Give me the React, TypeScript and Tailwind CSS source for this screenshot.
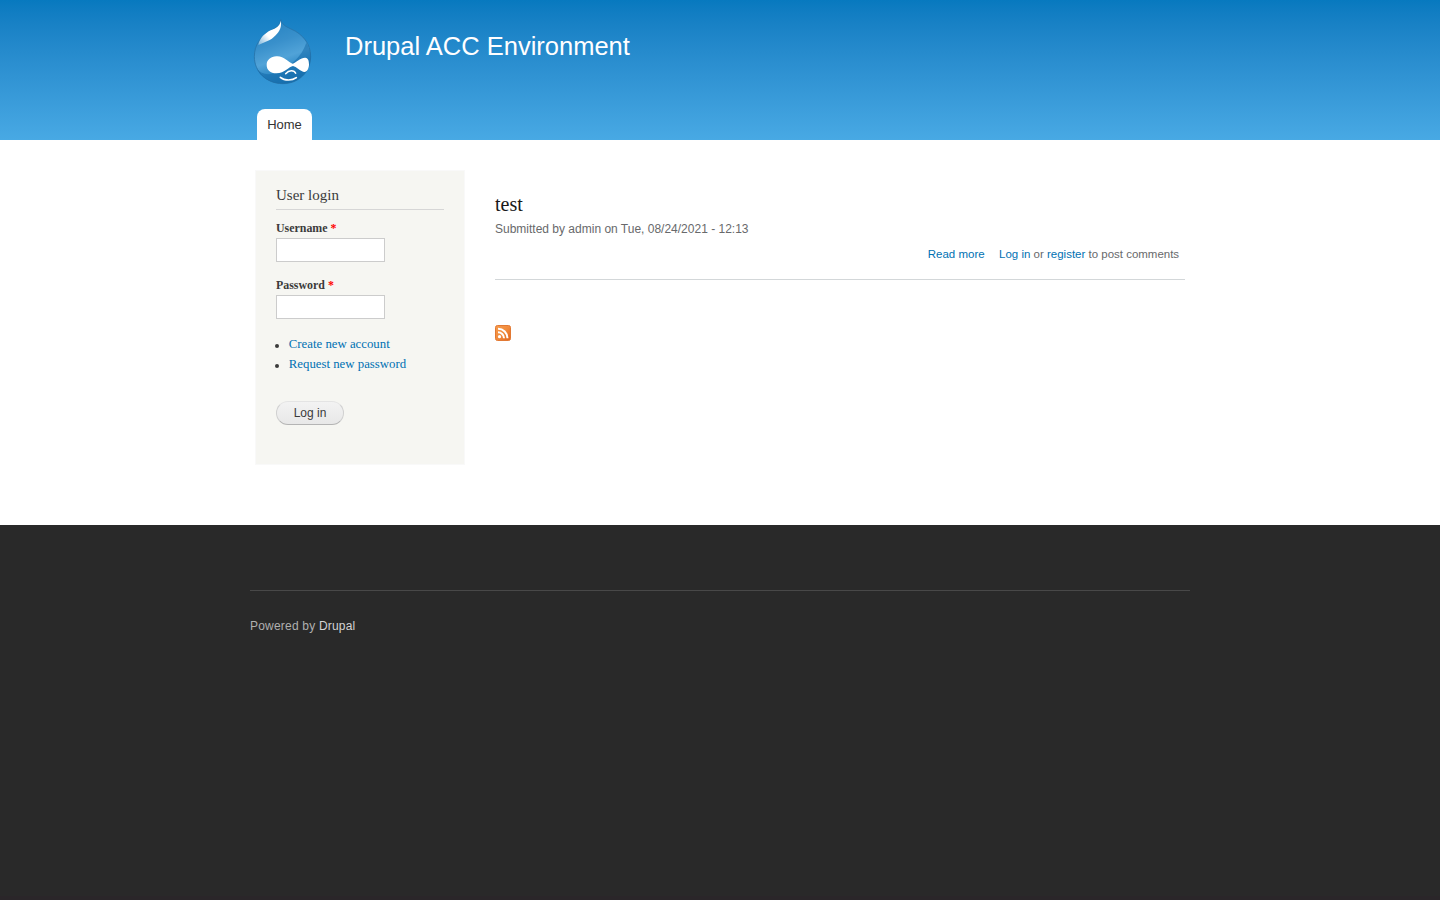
import type { ReactNode } from 'react';

function Logo() {
  return (
    <svg width="64" height="73" viewBox="24 18 192 219" aria-label="Home">
      <defs>
        <linearGradient id="drop" x1="0.3" y1="0" x2="0.6" y2="1">
          <stop offset="0" stopColor="#2583c2" />
          <stop offset="0.35" stopColor="#3990cb" />
          <stop offset="0.6" stopColor="#51a3d8" />
          <stop offset="0.8" stopColor="#2c87c4" />
          <stop offset="1" stopColor="#1c76b4" />
        </linearGradient>
        <linearGradient id="shine" x1="1" y1="0" x2="0" y2="1">
          <stop offset="0.6" stopColor="#fff" />
          <stop offset="1" stopColor="#fff" stopOpacity="0.35" />
        </linearGradient>
      </defs>
      <path d="M107 23C111 37 121 43 138 51C174 66 197 97 197 132C197 181 161 215 113 215C64 215 28 179 28 134C28 100 46 74 73 58C91 48 106 42 107 23Z" fill="url(#drop)" stroke="#2673aa" strokeWidth="2.5" />
      <path d="M184 92C193 106 197 119 197 135C196 179 162 215 113 215C76 215 46 196 35 169C50 190 75 192 101 178C138 160 170 135 184 92Z" fill="#0f66a5" opacity="0.5" />
      <path d="M107 26C111 44 104 57 92 70C78 86 58 91 40 99C44 77 61 63 77 55C94 48 105 42 107 26Z" fill="url(#shine)" />
      <path d="M94 133C116 131 130 151 143 155C154 151 168 136 181 137C190 138 192 148 192 157C192 169 187 181 177 180C166 178 154 164 144 162C132 163 120 184 94 184C76 184 65 174 65 159C65 143 78 134 94 133Z" fill="#fff" />
      <path d="M122 185C127 179 132 176 139 176C146 176 150 179 152 184" fill="none" stroke="#fff" strokeWidth="4.5" strokeLinecap="round" />
      <path d="M106 196C119 207 142 206 154 197" fill="none" stroke="#fff" strokeWidth="5" strokeLinecap="round" />
    </svg>
  );
}

function FeedIcon() {
  return (
    <svg width="16" height="16" viewBox="0 0 16 16" className="mt-[45px] block">
      <defs>
        <linearGradient id="feed" x1="0" y1="0" x2="1" y2="1">
          <stop offset="0" stopColor="#f79c4c" />
          <stop offset="0.5" stopColor="#f18b3d" />
          <stop offset="1" stopColor="#e0641c" />
        </linearGradient>
      </defs>
      <rect x="0.5" y="0.5" width="15" height="15" rx="2" fill="url(#feed)" stroke="#e27933" />
      <circle cx="4.5" cy="11.7" r="1.6" fill="#fff" />
      <path d="M3 7.3A6 6 0 0 1 9 13.2M3 3.7A9.5 9.5 0 0 1 12.5 13.2" fill="none" stroke="#fff" strokeWidth="2" />
    </svg>
  );
}

function Link({ children }: { children: ReactNode }) {
  return <a href="#" className="text-[#0071b3]">{children}</a>;
}

function Field({ label, type }: { label: string; type: string }) {
  return (
    <label className="block h-[57px] text-[11.9px] leading-[18px] font-bold">
      {label} <span className="text-[#f00]">*</span>
      <input type={type} className="mt-px block h-6 w-[109px] border border-[#ccc] bg-white px-1" />
    </label>
  );
}

function BulletItem({ children }: { children: ReactNode }) {
  return (
    <li className="flex h-5 items-center">
      <span className="mt-[3px] mr-[9.8px] ml-[-1px] size-[4px] rounded-full bg-[#3b3b3b]" />
      <Link>{children}</Link>
    </li>
  );
}

export default function App() {
  return (
    <div className="flex min-h-screen flex-col bg-[#292929] font-['Liberation_Serif',serif] text-[#3b3b3b] antialiased">
      <header className="h-[140px] bg-linear-to-b from-[#0779bf] to-[#48a9e4] font-['Liberation_Sans',sans-serif]">
        <div className="mx-auto flex h-full w-[940px] flex-col justify-between">
          <div className="flex pt-[18px] pl-[3px]">
            <Logo />
            <h1 className="ml-7 pt-[13px] text-[25.5px] leading-[30px] text-[#fffeff]">Drupal ACC Environment</h1>
          </div>
          <nav className="flex pl-[7px]">
            <a href="#" className="h-[31px] w-[55px] rounded-t-lg bg-white text-center text-[13px] leading-[32px] text-[#333]">Home</a>
          </nav>
        </div>
      </header>

      <div className="h-[385px] bg-white">
        <div className="mx-auto flex w-[940px] items-start pt-[30px] pl-[5px]">
          <aside className="h-[295px] w-[210px] border border-[#f9f9f9] bg-[#f6f6f2] px-5 pt-[15px]">
            <h2 className="mb-[9px] h-6 border-b border-[#d6d6d6] text-[15px] leading-[18px]">User login</h2>
            <Field label="Username" type="text" />
            <Field label="Password" type="password" />
            <ul className="mt-px text-[12.8px] leading-5">
              <BulletItem>Create new account</BulletItem>
              <BulletItem>Request new password</BulletItem>
            </ul>
            <button className="mt-[27px] block h-6 w-[68px] rounded-full border border-[#d0d0d0] border-t-[#e4e4e4] border-b-[#b4b4b4] bg-linear-to-b from-[#f3f3f3] to-[#e8e8e8] font-['Liberation_Sans',sans-serif] text-[12px] leading-[22px] text-[#3a3a3a]">
              Log in
            </button>
          </aside>

          <main className="ml-[30px] w-[690px]">
            <article className="h-[110px] border-b border-[#d3d7d9] pt-[22px]">
              <h2 className="text-[20px] leading-6 text-[#181818]">test</h2>
              <div className="mt-[5px] font-['Liberation_Sans',sans-serif] text-[12px] leading-4 text-[#68696b]">
                Submitted by admin on Tue, 08/24/2021 - 12:13
              </div>
              <div className="mt-[9px] flex justify-end gap-[14.5px] pr-[5.9px] font-['Liberation_Sans',sans-serif] text-[11.49px] leading-4 text-[#68696b]">
                <Link>Read more</Link>
                <span><Link>Log in</Link> or <Link>register</Link> to post comments</span>
              </div>
            </article>
            <FeedIcon />
          </main>
        </div>
      </div>

      <footer className="flex-1 border-b-4 border-[#2a2629] pt-[65px]">
        <div className="mx-auto w-[940px] border-t border-[#484848] pt-[27px] font-['Liberation_Sans',sans-serif] text-[12px] leading-4 tracking-[0.2px] text-[#b0b0b0]">
          Powered by <a href="#" className="text-[#d4d4d4]">Drupal</a>
        </div>
      </footer>
    </div>
  );
}
